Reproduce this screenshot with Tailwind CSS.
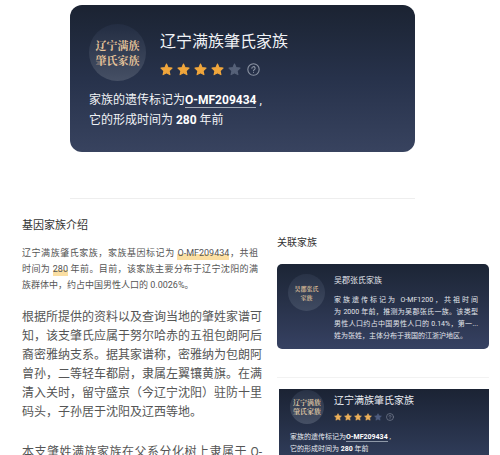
<!DOCTYPE html>
<html lang="zh-CN">
<head>
    <meta charset="UTF-8">
    <meta name="viewport" content="width=device-width, initial-scale=1.0">
    <title>辽宁满族肇氏家族</title>
    <script src="https://cdn.jsdelivr.net/npm/@tailwindcss/browser@4"></script>
</head>
<body class="h-screen overflow-hidden bg-white font-[Roboto,'Noto_Sans_CJK_SC',sans-serif] text-[#444444]">
    <!-- Shared shapes -->
    <svg class="hidden" aria-hidden="true">
        <symbol id="star" viewBox="0 0 24 24">
            <path fill="currentColor" stroke="currentColor" stroke-width="2" stroke-linejoin="round" d="M12 2l3 6.600 7.200.800-5.400 4.900 1.500 7.200L12 17.900l-6.300 3.600 1.500-7.200L1.800 9.400 9 8.600z"/>
        </symbol>
        <symbol id="help" viewBox="0 0 24 24">
            <g fill="none" stroke="currentColor" stroke-width="2" stroke-linecap="round">
                <circle cx="12" cy="12" r="10.500"/>
                <path d="M9 9.800a3 3 0 1 1 4.400 2.600c-.900.500-1.400 1-1.400 1.900"/>
                <path d="M12 17.400v.100"/>
            </g>
        </symbol>
    </svg>

    <!-- Family card -->
    <header class="ml-[70px] mr-[85px] pt-[5px]">
        <section class="rounded-xl bg-linear-to-b from-[#1b2332] via-[#27324b] to-[#38435f] px-[19px] pt-[19px] pb-[22px] text-[#f1f3f6]">
            <div class="flex gap-[14px]">
                <div class="flex size-[57px] shrink-0 items-center justify-center rounded-full bg-linear-to-b from-[#232d42] to-[#465065] text-center font-['Noto_Serif_CJK_SC','Noto_Sans_CJK_SC',serif] text-[11px] leading-[15px] font-bold text-[#e6c49a]">辽宁满族<br>肇氏家族</div>
                <div class="pt-[6px]">
                    <h1 class="text-base leading-6">辽宁满族肇氏家族</h1>
                    <div class="mt-[9px] flex items-center gap-1 text-[#f0a63c]">
                        <svg class="size-[13px]"><use href="#star"/></svg>
                        <svg class="size-[13px]"><use href="#star"/></svg>
                        <svg class="size-[13px]"><use href="#star"/></svg>
                        <svg class="size-[13px]"><use href="#star"/></svg>
                        <svg class="size-[13px] text-[#566178]"><use href="#star"/></svg>
                        <button type="button" aria-label="帮助" class="ml-[2px] text-[#8b93a3]"><svg class="size-[13px]"><use href="#help"/></svg></button>
                    </div>
                </div>
            </div>
            <p class="mt-[9px] text-xs leading-5">家族的遗传标记为<a href="#" class="border-b border-[#a3acb9] font-bold text-white">O-MF209434</a> ,<br>它的形成时间为 <b class="text-white">280</b> 年前</p>
        </section>
        <hr class="mt-[46px] border-[#eeeeee]">
    </header>

    <main class="grid grid-cols-[240fr_212fr] gap-[15px] pt-[19px] pr-[11px] pl-[22px]">
        <!-- Introduction -->
        <article>
            <h2 class="text-[11px] leading-4 text-[#333333]">基因家族介绍</h2>
            <p class="mt-[11px] pr-1 text-[9px] leading-4 text-[#555555]">
                <span class="block text-justify [text-align-last:justify]">辽宁满族肇氏家族，家族基因标记为 <mark class="bg-transparent bg-linear-to-b from-transparent from-50% to-[#fbdfa2] to-50% pb-[2px] text-inherit">O-MF209434</mark>，共祖</span>
                <span class="block text-justify [text-align-last:justify]">时间为 <mark class="bg-transparent bg-linear-to-b from-transparent from-50% to-[#fbdfa2] to-50% pb-[2px] text-inherit">280</mark> 年前。目前，该家族主要分布于辽宁沈阳的满</span>
                <span class="block">族群体中，约占中国男性人口的 0.0026%。</span>
            </p>
            <p class="mt-[15px] text-xs leading-[19px] text-[#555555]">根据所提供的资料以及查询当地的肇姓家谱可<br>知，该支肇氏应属于努尔哈赤的五祖包朗阿后<br>裔密雅纳支系。据其家谱称，密雅纳为包朗阿<br>曾孙，二等轻车都尉，隶属左翼镶黄旗。在满<br>清入关时，留守盛京（今辽宁沈阳）驻防十里<br>码头，子孙居于沈阳及辽西等地。</p>
            <p class="mt-[21px] text-xs leading-[19px] text-[#555555] [text-align-last:justify]">本支肇姓满族家族在父系分化树上隶属于 O-</p>
        </article>

        <!-- Related families -->
        <aside class="pt-[17px]">
            <h2 class="text-[10px] leading-4 text-[#333333]">关联家族</h2>
            <section class="mt-[13px] flex gap-[9px] rounded-[5px] bg-linear-to-b from-[#1c2535] to-[#364162] pt-[10px] pr-[11px] pb-[7px] pl-[11px] text-[#e3e6ec]">
                <div class="flex size-[37px] shrink-0 items-center justify-center rounded-full bg-linear-to-b from-[#293347] to-[#404b62] text-center font-['Noto_Serif_CJK_SC','Noto_Sans_CJK_SC',serif] text-[6px] leading-[9px] font-bold text-[#d3b795]">吴郡张氏<br>家族</div>
                <div class="min-w-0 flex-1">
                    <h3 class="pt-px text-[8px] leading-3">吴郡张氏家族</h3>
                    <p class="mt-[7px] text-[7px] leading-3">
                        <span class="block [text-align-last:justify]">家族遗传标记为 O-MF1200，共祖时间</span>
                        <span class="block [text-align-last:justify]">为 2000 年前，推测为吴郡张氏一族。该类型</span>
                        <span class="block [text-align-last:justify]">男性人口约占中国男性人口的 0.14%，第一...</span>
                        <span class="block">姓为张姓，主体分布于我国的江浙沪地区。</span>
                    </p>
                </div>
            </section>
            <hr class="mt-7 border-[#f2f2f2]">
            <section class="mt-[11px] ml-[2px] bg-linear-to-b from-[#1b2334] to-[#33405f] px-[11px] pt-px pb-3 text-[#e8ebf0]">
                <div class="flex gap-[10px]">
                    <div class="flex size-[34px] shrink-0 items-center justify-center rounded-full bg-linear-to-b from-[#283246] to-[#465065] text-center font-['Noto_Serif_CJK_SC','Noto_Sans_CJK_SC',serif] text-[7px] leading-[9px] font-bold text-[#d8c1a2]">辽宁满族<br>肇氏家族</div>
                    <div class="pt-1">
                        <h3 class="text-[10px] leading-[14px]">辽宁满族肇氏家族</h3>
                        <div class="mt-[5px] flex items-center gap-[2px] text-[#eeb15a]">
                            <svg class="size-2"><use href="#star"/></svg>
                            <svg class="size-2"><use href="#star"/></svg>
                            <svg class="size-2"><use href="#star"/></svg>
                            <svg class="size-2"><use href="#star"/></svg>
                            <svg class="size-2 text-[#4f5d80]"><use href="#star"/></svg>
                            <button type="button" aria-label="帮助" class="ml-[2px] text-[#7b8496]"><svg class="size-2"><use href="#help"/></svg></button>
                        </div>
                    </div>
                </div>
                <p class="mt-[7px] text-[7px] leading-3">家族的遗传标记为<a href="#" class="border-b border-[#8e98a8] font-bold text-white">O-MF209434</a> ,<br>它的形成时间为 <b class="text-white">280</b> 年前</p>
            </section>
        </aside>
    </main>
</body>
</html>
